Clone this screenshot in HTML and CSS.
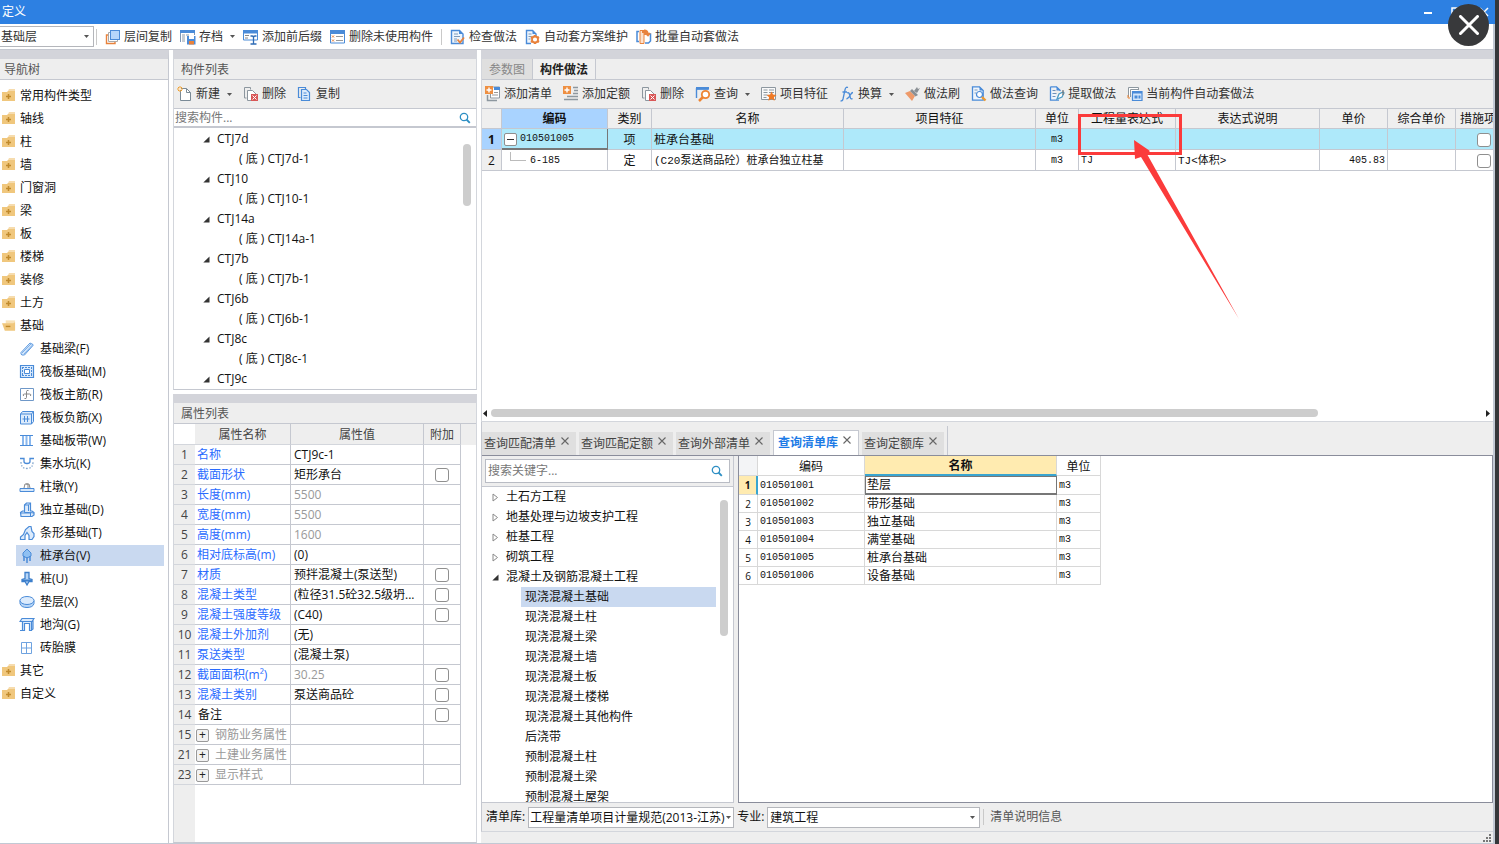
FILE: index.html
```html
<!DOCTYPE html>
<html lang="zh-CN">
<head>
<meta charset="utf-8">
<title>定义</title>
<link rel="stylesheet" href="styles.css">
</head>
<body>
<svg class="defs" aria-hidden="true">
  <symbol id="caret" viewBox="0 0 5 3"><path d="M0 0h5L2.500 3z" fill="#555"/></symbol>
  <symbol id="open" viewBox="0 0 7 7"><path d="M6.500 .5v6H.3z" fill="#333"/></symbol>
  <symbol id="closed" viewBox="0 0 7 9"><path d="M1 1v7l4.500-3.500z" fill="#fff" stroke="#8a8a8a"/></symbol>
  <symbol id="search" viewBox="0 0 12 12"><circle cx="5" cy="5" r="3.700" fill="none" stroke="#2e8fc4" stroke-width="1.300"/><path d="M7.500 7.500l3.300 3.300" stroke="#2e8fc4" stroke-width="1.800"/></symbol>
  <symbol id="x" viewBox="0 0 8 8"><path d="M.5.5l7 7m0-7l-7 7" stroke="#666" stroke-width="1.100"/></symbol>
  <symbol id="folder" viewBox="0 0 14 13"><path d="M7 0h6v2H6z" fill="#f6dcae"/><path d="M0 3h5l1-1h7v10H0z" fill="#f0c77d"/><path d="M6.500 5v5M4 7.500h5" stroke="#c08a2c" stroke-width="1.500"/></symbol>
  <symbol id="folder-open" viewBox="0 0 15 13"><path d="M4 1h10v9H4z" fill="#f8e2b8"/><path d="M0 4h12l2-1v9H3z" fill="#f0c77d"/><path d="M4 7.500h5" stroke="#c08a2c" stroke-width="1.500"/></symbol>

  <symbol id="layers" viewBox="0 0 16 16"><path d="M3 6H1.500v8.500h8.500V13" fill="none" stroke="#e8823c" stroke-width="1.400"/><path d="M5 3.500H3.500v9h9V11" fill="none" stroke="#a9a9a9"/><rect x="5.500" y="1.500" width="9" height="9" fill="#b5d6fb" stroke="#4a8bd8"/></symbol>
  <symbol id="save" viewBox="0 0 16 16"><path d="M.5 13V1.500h14V6" fill="#fff" stroke="#7c97b8"/><path d="M0 1h15v3H0z" fill="#4a8bd8"/><path d="M2 6h3m-3 2h3m-3 2h3m-3 2h3M6 6h3" stroke="#8b9aab"/><path d="M7 7h8.500v8.500H7z" fill="#4a8bd8"/><path d="M9 7h5v3H9z" fill="#fff"/><path d="M9 12h5v3.500H9z" fill="#e8823c"/></symbol>
  <symbol id="affix" viewBox="0 0 16 16"><path d="M.5 2h14v9H.5z" fill="#fff" stroke="#4a8bd8"/><path d="M0 1h15v3.500H0z" fill="#4a8bd8"/><path d="M2 6.500h4M2 9h3" stroke="#888"/><path d="M7 7h7v3H7z" fill="#fff"/><path d="M10.500 7v8M7.500 7h1.700q1.300 0 1.300 1.500Q10.500 7 12 7h1.500M7.500 15h6" fill="none" stroke="#2e6bb5" stroke-width="1.300"/></symbol>
  <symbol id="unused" viewBox="0 0 16 16"><path d="M.5 2h14v12H.5z" fill="#fff" stroke="#4a8bd8"/><path d="M0 1h15v4H0z" fill="#4a8bd8"/><path d="M2 6.500l2 2m0-2l-2 2m0 2l2 2m0-2l-2 2" stroke="#e8823c"/><path d="M6 7.500h7m-7 4h7" stroke="#999"/></symbol>
  <symbol id="check-doc" viewBox="0 0 16 16"><path d="M1.500 1.500h8l3.500 3.500v9.500H1.500z" fill="#eef5fd" stroke="#4a8bd8" stroke-width="1.400"/><path d="M9 1v4h4z" fill="#4a8bd8"/><path d="M4 5h4m-4 2.500h6M4 10h3m-3 2h3" stroke="#7f9bbb"/><path d="M7.500 10.500l2.500 3 4-5" fill="none" stroke="#e8823c" stroke-width="1.800"/></symbol>
  <symbol id="gear-doc" viewBox="0 0 16 16"><path d="M6 14.500H1.500v-13h6L11 5v2" fill="#eef5fd" stroke="#4a8bd8" stroke-width="1.400"/><path d="M7.500 1v4H11z" fill="#4a8bd8"/><path d="M3.500 5h3m-3 2.500h3m-3 2.500h2" stroke="#7f9bbb"/><path d="M10 6v9M6 8l8 5m0-5l-8 5" stroke="#e8823c" stroke-width="2.200"/><circle cx="10" cy="10.500" r="3" fill="#fff" stroke="#e8823c" stroke-width="1.800"/></symbol>
  <symbol id="batch" viewBox="0 0 16 16"><path d="M3 2.500H1v10h2M13 5h1.500v7l-2 2H9" fill="none" stroke="#4a8bd8" stroke-width="1.500"/><path d="M4 1.500h4v13H4z" fill="#fbe2cf" stroke="#e8823c"/><path d="M8 1.500q4 0 4 4.500m-2.500-2L12 6.500l2-2.500M6 3h3v3" fill="none" stroke="#e8823c" stroke-width="1.800"/></symbol>
  <symbol id="new" viewBox="0 0 16 16"><path d="M3.500 2.500h6l4 4v8h-10z" fill="#fff" stroke="#7a8a96"/><path d="M9.500 2.500v4h4" fill="none" stroke="#7a8a96"/><path d="M3 0v6M0 3h6M1 1l4 4m0-4L1 5" stroke="#f0a030"/><circle cx="3" cy="3" r="1" fill="#fff"/></symbol>
  <symbol id="delete" viewBox="0 0 16 16"><path d="M3.500 12H1.500V1.500h6v2" fill="none" stroke="#8d979f"/><path d="M4.500 4.500h5l4 4v6h-9z" fill="#fff" stroke="#8d979f"/><path d="M8 8h7v7H8z" fill="#d95757"/><path d="M9.500 9.500l4 4m0-4l-4 4" stroke="#fff"/></symbol>
  <symbol id="copy" viewBox="0 0 16 16"><path d="M3.500 11.500h-2v-10h7v2" fill="none" stroke="#4a8bd8" stroke-width="1.200"/><path d="M4.500 3.500h5l3 3v8h-8z" fill="#dcebfc" stroke="#4a8bd8" stroke-width="1.200"/><path d="M6.500 7h3m-3 2.500h4m-4 2.500h4" stroke="#4a8bd8"/></symbol>
  <symbol id="add-list" viewBox="0 0 16 16"><path d="M5.500 4V1h9v11h-9z" fill="#fff" stroke="#8d979f"/><path d="M9 1h6v3H9z" fill="#4a8bd8"/><path d="M9 6.500h4M7 9h6" stroke="#999"/><path d="M2.500 9v5.500H12" fill="none" stroke="#8d979f" stroke-width="1.500"/><path d="M0 0h8v8H0z" fill="#ee8f42"/><path d="M4 1.500v5M1.500 4h5" stroke="#fff" stroke-width="1.400"/></symbol>
  <symbol id="add-quota" viewBox="0 0 16 16"><path d="M10 1.500h5M11 4.500h4M10 7.500h5M4 10.500h11M1 13.500h14" stroke="#8d979f" stroke-width="1.500"/><path d="M0 0h8v8H0z" fill="#ee8f42"/><path d="M4 1.500v5M1.500 4h5" stroke="#fff" stroke-width="1.400"/></symbol>
  <symbol id="query" viewBox="0 0 16 16"><path d="M1.500 12V3h12" fill="none" stroke="#4a8bd8" stroke-width="1.400"/><path d="M1 1h13v2.500H1z" fill="#4a8bd8"/><circle cx="10.500" cy="8.500" r="3.700" fill="#fff" stroke="#ee8432" stroke-width="1.800"/><path d="M8 11l-4 4" stroke="#ee8432" stroke-width="2.500"/></symbol>
  <symbol id="feature" viewBox="0 0 16 16"><path d="M.5 1.500h14v12H.5z" fill="#fafafa" stroke="#8d979f"/><path d="M2.500 4h4m1.500 0h5M2.500 6.500h4m1.500 0h5M2.500 9h4m-4 2.500h3" stroke="#8d979f"/><path d="M10.500 5.500l1.500 3 3.500.4-2.600 2.300.7 3.600-3.100-1.800-3.100 1.800.7-3.600L5.600 9l3.500-.5z" fill="#ee7a28"/></symbol>
  <symbol id="fx" viewBox="0 0 16 16"><path d="M9 1.500Q6.500.5 6 4L4 13q-.6 2.300-2.500 1.800M3.500 6H8M8 7q2-1 2.500 1.500l1 3.500q.5 1.500 2 .5M14 6.500q-1.500 0-3 3t-3.500 3.500" fill="none" stroke="#4a8bd8" stroke-width="1.300"/></symbol>
  <symbol id="brush" viewBox="0 0 16 16"><path d="M0 7l5-2 5 5-3 5z" fill="#ee9a6a"/><path d="M5 5l2-2 6 6-2.500 1.500z" fill="#8a8f94"/><path d="M9 5l3-4 1 2 2-1-3 5z" fill="#8a8f94"/></symbol>
  <symbol id="doc-search" viewBox="0 0 16 16"><path d="M1.500.8h7l3.700 3.700v9.700H1.500z" fill="#eef5fd" stroke="#4a8bd8" stroke-width="1.300"/><path d="M8.500.5v4h4z" fill="#4a8bd8"/><path d="M3.500 4h3m-3 3h2" stroke="#7f9bbb"/><circle cx="8.500" cy="8.500" r="3" fill="#fff" stroke="#4a8bd8" stroke-width="1.200"/><path d="M11 11l3.500 3.500" stroke="#ee9a30" stroke-width="2.400"/></symbol>
  <symbol id="extract" viewBox="0 0 16 16"><path d="M1.500.8h6l4 4M1.500.8v13.400H10" fill="#eef5fd" stroke="#4a8bd8" stroke-width="1.300"/><path d="M7.500.5v4h4z" fill="#4a8bd8"/><path d="M3.500 4.500h3m-3 3h4m-4 3h3" stroke="#6d91ba"/><path d="M8 13l2-5 4-2 1 1-2 4z" fill="#fff" stroke="#4b9cc7" stroke-width="1.300"/><path d="M14 4v5" stroke="#777" stroke-width="1.300"/></symbol>
  <symbol id="auto" viewBox="0 0 16 16"><path d="M1.500 11V1.500h10V4" fill="#fff" stroke="#8d979f"/><path d="M3.500 11V3.500h8" fill="none" stroke="#8d979f"/><path d="M1 9v3h2" fill="none" stroke="#ee8432"/><path d="M5.500 5.500h9.500v9H5.500z" fill="#d3e6fb" stroke="#4a8bd8" stroke-width="1.200"/><path d="M5 5h10v2.500H5z" fill="#4a8bd8"/><path d="M7.500 9.500h3v3h-3zm4 0h2v3h-2z" fill="#4a8bd8"/></symbol>

  <symbol id="beam" viewBox="0 0 16 16"><path d="M2 11.500L11 2l3 1.500v1L5.500 14H3q-1.500-.5-1-2.500z" fill="#d6e8fb" stroke="#5e9ae0"/><path d="M3 12L12 3M5 13l8.500-9" stroke="#7fb0e8"/></symbol>
  <symbol id="raft" viewBox="0 0 16 16"><path d="M1.500 1.500h13v12h-13z" fill="#dcebfc" stroke="#4a8bd8" stroke-width="1.200"/><path d="M5.500 5.500h5v4h-5z" fill="#fff" stroke="#4a8bd8"/><path d="M3 3.500h10M3 11.500h10M3.500 3v9m9-9v9" stroke="#4a8bd8" stroke-dasharray="2 1"/></symbol>
  <symbol id="rebar" viewBox="0 0 16 16"><path d="M1.500 1.500h13v12h-13z" fill="#fff" stroke="#6f98c8"/><path d="M9.500 3.500q-2-.5-2 1v6q0 1.500-2 1M4.500 9q-1-2 1-2h5q2 0 1 2" fill="none" stroke="#888"/></symbol>
  <symbol id="neg-rebar" viewBox="0 0 16 16"><path d="M1.500 4l2-2.500h11v10l-2 2.500h-11z" fill="#dcebfc" stroke="#4a8bd8"/><path d="M1.500 4h11v10M12.500 4l2-2.500M5.500 6v6m3-6v6M3.500 9h7" fill="none" stroke="#4a8bd8"/></symbol>
  <symbol id="strip" viewBox="0 0 16 16"><path d="M1 2.500h13M1 12.500h13" stroke="#4a8bd8"/><path d="M3 3h2v9H3zm3.500 0h2v9h-2zM10 3h2v9h-2z" fill="#8ab8ee"/></symbol>
  <symbol id="pit" viewBox="0 0 16 16"><path d="M1 2.500h4v3q0 2 3 2t3-2v-3h4" fill="none" stroke="#4a8bd8" stroke-width="1.300"/><path d="M2 6q0 6.500 6 6.500t6-6.500" fill="none" stroke="#86a9cf" stroke-width="1.300" stroke-dasharray="1.500 1.500"/></symbol>
  <symbol id="pier" viewBox="0 0 16 16"><path d="M1 9.500h14v3H1z" fill="#d6e8fb" stroke="#4a8bd8"/><path d="M5 9l1-4h4l1 4M7 5h2v4" fill="none" stroke="#888"/></symbol>
  <symbol id="isolated" viewBox="0 0 16 16"><path d="M1.500 10.500l2-1.500h2V3l2-2h4v8h1.500l2 1.500V13l-2 1.500h-11z" fill="#dcebfc" stroke="#4a8bd8" stroke-width="1.200"/><path d="M5.500 3h4V9M9.500 3l2-2M5.500 9v1.500h5L15 11M1.500 11h10v3" fill="none" stroke="#4a8bd8"/></symbol>
  <symbol id="bar-base" viewBox="0 0 16 16"><path d="M1.500 14.500V12l3-2.500 2-5L10 1.500h2l1 5 2 2v3l-2 3h-3v-4l-2-3-2 3v4z" fill="#dcebfc" stroke="#4a8bd8" stroke-width="1.200"/></symbol>
  <symbol id="cap" viewBox="0 0 16 16"><path d="M4 5l4-4 4 4v3L8 10 4 8z" fill="#8fc0f2" stroke="#4a8bd8"/><path d="M5 8v5m3-4v6m3-7v5" stroke="#4a8bd8" stroke-width="1.500"/></symbol>
  <symbol id="pile" viewBox="0 0 16 16"><path d="M6 1.500h4v6l3 1v2h-3L8 14l-2-3.500H3v-2l3-1z" fill="#b8d6f7" stroke="#3d7fcb" stroke-width="1.300"/><path d="M3 9.500h10" stroke="#3d7fcb" stroke-width="2"/></symbol>
  <symbol id="cushion" viewBox="0 0 16 16"><path d="M1 6.500v3q1 4 7 4t7-4v-3" fill="#b8d6f7" stroke="#4a8bd8"/><ellipse cx="8" cy="6.500" rx="7" ry="4" fill="#dcebfc" stroke="#4a8bd8"/></symbol>
  <symbol id="trench" viewBox="0 0 16 16"><path d="M1 4.500l2-3h12l-2 3zM3.500 4.500v9h2v-7h5v7h2v-9M12.500 13l1.500-1V3M1 13.500h4m5 0h3" fill="#dcebfc" stroke="#4a8bd8" stroke-width="1.200"/></symbol>
  <symbol id="brick" viewBox="0 0 16 16"><path d="M2.500 2.500h10v11h-10z" fill="#fff" stroke="#6fa3e0"/><path d="M7.500 3v10M3 8h9" stroke="#6fa3e0"/></symbol>
</svg>

<div class="app">
  <header class="titlebar">
    <span>定义</span>
    <div class="win-buttons">
      <button aria-label="最小化"><svg viewBox="0 0 10 10"><path d="M1 6h8" stroke="#fff" stroke-width="2"/></svg></button>
      <button aria-label="最大化"><svg viewBox="0 0 10 10"><path d="M1 1h8v8H1z" fill="none" stroke="#fff" stroke-width="1.500"/></svg></button>
      <button aria-label="关闭"><svg viewBox="0 0 10 10"><path d="M1 1l8 8m0-8L1 9" stroke="#fff" stroke-width="1.500"/></svg></button>
    </div>
  </header>

  <div class="main-toolbar">
    <div class="combo floor"><select aria-label="楼层"><option>基础层</option></select><svg><use href="#caret"/></svg></div>
    <i class="sep"></i>
    <button class="tool"><svg><use href="#layers"/></svg>层间复制</button>
    <button class="tool"><svg><use href="#save"/></svg>存档<svg class="caret"><use href="#caret"/></svg></button>
    <button class="tool"><svg><use href="#affix"/></svg>添加前后缀</button>
    <button class="tool"><svg><use href="#unused"/></svg>删除未使用构件</button>
    <i class="sep"></i>
    <button class="tool"><svg><use href="#check-doc"/></svg>检查做法</button>
    <button class="tool"><svg><use href="#gear-doc"/></svg>自动套方案维护</button>
    <button class="tool"><svg><use href="#batch"/></svg>批量自动套做法</button>
  </div>

  <div class="workspace">
    <nav class="panel nav">
      <h2>导航树</h2>
      <ul class="nav-tree">
        <li><svg><use href="#folder"/></svg>常用构件类型</li>
        <li><svg><use href="#folder"/></svg>轴线</li>
        <li><svg><use href="#folder"/></svg>柱</li>
        <li><svg><use href="#folder"/></svg>墙</li>
        <li><svg><use href="#folder"/></svg>门窗洞</li>
        <li><svg><use href="#folder"/></svg>梁</li>
        <li><svg><use href="#folder"/></svg>板</li>
        <li><svg><use href="#folder"/></svg>楼梯</li>
        <li><svg><use href="#folder"/></svg>装修</li>
        <li><svg><use href="#folder"/></svg>土方</li>
        <li><svg><use href="#folder-open"/></svg>基础</li>
        <li class="sub"><svg><use href="#beam"/></svg>基础梁(F)</li>
        <li class="sub"><svg><use href="#raft"/></svg>筏板基础(M)</li>
        <li class="sub"><svg><use href="#rebar"/></svg>筏板主筋(R)</li>
        <li class="sub"><svg><use href="#neg-rebar"/></svg>筏板负筋(X)</li>
        <li class="sub"><svg><use href="#strip"/></svg>基础板带(W)</li>
        <li class="sub"><svg><use href="#pit"/></svg>集水坑(K)</li>
        <li class="sub"><svg><use href="#pier"/></svg>柱墩(Y)</li>
        <li class="sub"><svg><use href="#isolated"/></svg>独立基础(D)</li>
        <li class="sub"><svg><use href="#bar-base"/></svg>条形基础(T)</li>
        <li class="sub selected"><svg><use href="#cap"/></svg>桩承台(V)</li>
        <li class="sub"><svg><use href="#pile"/></svg>桩(U)</li>
        <li class="sub"><svg><use href="#cushion"/></svg>垫层(X)</li>
        <li class="sub"><svg><use href="#trench"/></svg>地沟(G)</li>
        <li class="sub"><svg><use href="#brick"/></svg>砖胎膜</li>
        <li><svg><use href="#folder"/></svg>其它</li>
        <li><svg><use href="#folder"/></svg>自定义</li>
      </ul>
    </nav>

    <div class="middle">
      <section class="panel components">
        <h2>构件列表</h2>
        <div class="toolbar">
          <button class="tool"><svg><use href="#new"/></svg>新建<svg class="caret"><use href="#caret"/></svg></button>
          <button class="tool"><svg><use href="#delete"/></svg>删除</button>
          <button class="tool"><svg><use href="#copy"/></svg>复制</button>
        </div>
        <div class="search flat"><input type="text" aria-label="搜索构件" placeholder="搜索构件..."><svg><use href="#search"/></svg></div>
        <div class="tree-box">
          <ul class="comp-tree">
            <li><svg><use href="#open"/></svg>CTJ7d</li><li class="leaf">( 底 ) CTJ7d-1</li>
            <li><svg><use href="#open"/></svg>CTJ10</li><li class="leaf">( 底 ) CTJ10-1</li>
            <li><svg><use href="#open"/></svg>CTJ14a</li><li class="leaf">( 底 ) CTJ14a-1</li>
            <li><svg><use href="#open"/></svg>CTJ7b</li><li class="leaf">( 底 ) CTJ7b-1</li>
            <li><svg><use href="#open"/></svg>CTJ6b</li><li class="leaf">( 底 ) CTJ6b-1</li>
            <li><svg><use href="#open"/></svg>CTJ8c</li><li class="leaf">( 底 ) CTJ8c-1</li>
            <li><svg><use href="#open"/></svg>CTJ9c</li>
          </ul>
          <div class="vbar comp-bar"></div>
        </div>
      </section>

      <section class="panel props">
        <h2>属性列表</h2>
        <div class="props-body">
        <table class="prop-table">
          <colgroup><col class="p-no"><col class="p-name"><col class="p-value"><col class="p-add"></colgroup>
          <thead><tr><th class="blank"></th><th>属性名称</th><th>属性值</th><th>附加</th></tr></thead>
          <tbody>
            <tr><th>1</th><td class="link">名称</td><td>CTJ9c-1</td><td></td></tr>
            <tr><th>2</th><td class="link">截面形状</td><td>矩形承台</td><td><input type="checkbox" aria-label="截面形状 附加"></td></tr>
            <tr><th>3</th><td class="link">长度(mm)</td><td class="dim">5500</td><td></td></tr>
            <tr><th>4</th><td class="link">宽度(mm)</td><td class="dim">5500</td><td></td></tr>
            <tr><th>5</th><td class="link">高度(mm)</td><td class="dim">1600</td><td></td></tr>
            <tr><th>6</th><td class="link">相对底标高(m)</td><td>(0)</td><td></td></tr>
            <tr><th>7</th><td class="link">材质</td><td>预拌混凝土(泵送型)</td><td><input type="checkbox" aria-label="材质 附加"></td></tr>
            <tr><th>8</th><td class="link">混凝土类型</td><td>(粒径31.5砼32.5级坍...</td><td><input type="checkbox" aria-label="混凝土类型 附加"></td></tr>
            <tr><th>9</th><td class="link">混凝土强度等级</td><td>(C40)</td><td><input type="checkbox" aria-label="混凝土强度等级 附加"></td></tr>
            <tr><th>10</th><td class="link">混凝土外加剂</td><td>(无)</td><td></td></tr>
            <tr><th>11</th><td class="link">泵送类型</td><td>(混凝土泵)</td><td></td></tr>
            <tr><th>12</th><td class="link">截面面积(m²)</td><td class="dim">30.25</td><td><input type="checkbox" aria-label="截面面积 附加"></td></tr>
            <tr><th>13</th><td class="link">混凝土类别</td><td>泵送商品砼</td><td><input type="checkbox" aria-label="混凝土类别 附加"></td></tr>
            <tr><th>14</th><td>备注</td><td></td><td><input type="checkbox" aria-label="备注 附加"></td></tr>
            <tr><th>15</th><td class="dim group"><button class="expander">+</button>钢筋业务属性</td><td></td><td></td></tr>
            <tr><th>21</th><td class="dim group"><button class="expander">+</button>土建业务属性</td><td></td><td></td></tr>
            <tr><th>23</th><td class="dim group"><button class="expander">+</button>显示样式</td><td></td><td></td></tr>
          </tbody>
        </table>
        <div class="gutter"></div>
        </div>
      </section>
    </div>

    <main class="right">
      <section class="panel methods">
        <div class="top-tabs"><button>参数图</button><button class="active">构件做法</button></div>
        <div class="toolbar wide">
          <button class="tool"><svg><use href="#add-list"/></svg>添加清单</button>
          <button class="tool"><svg><use href="#add-quota"/></svg>添加定额</button>
          <button class="tool"><svg><use href="#delete"/></svg>删除</button>
          <button class="tool"><svg><use href="#query"/></svg>查询<svg class="caret"><use href="#caret"/></svg></button>
          <button class="tool"><svg><use href="#feature"/></svg>项目特征</button>
          <button class="tool"><svg><use href="#fx"/></svg>换算<svg class="caret"><use href="#caret"/></svg></button>
          <button class="tool"><svg><use href="#brush"/></svg>做法刷</button>
          <button class="tool"><svg><use href="#doc-search"/></svg>做法查询</button>
          <button class="tool"><svg><use href="#extract"/></svg>提取做法</button>
          <button class="tool"><svg><use href="#auto"/></svg>当前构件自动套做法</button>
        </div>
        <div class="method-box">
          <table class="method-table">
            <colgroup><col class="m-no"><col class="m-code"><col class="m-kind"><col class="m-name"><col class="m-feat"><col class="m-unit"><col class="m-expr"><col class="m-note"><col class="m-price"><col class="m-price"><col class="m-step"></colgroup>
            <thead><tr><th></th><th class="current">编码</th><th>类别</th><th>名称</th><th>项目特征</th><th>单位</th><th>工程量表达式</th><th>表达式说明</th><th>单价</th><th>综合单价</th><th>措施项目</th></tr></thead>
            <tbody>
              <tr class="active"><th>1</th><td class="focus mono"><div class="tree-cell"><button class="minus" aria-label="折叠"></button>010501005</div></td><td class="mid">项</td><td>桩承台基础</td><td></td><td class="mid mono">m3</td><td></td><td></td><td></td><td></td><td class="mid"><input type="checkbox" aria-label="措施项目 1"></td></tr>
              <tr><th>2</th><td class="mono"><div class="tree-cell"><i class="branch"></i>6-185</div></td><td class="mid">定</td><td class="mixed">(C20泵送商品砼）桩承台独立柱基</td><td></td><td class="mid mono">m3</td><td class="mono">TJ</td><td class="mixed">TJ&lt;体积&gt;</td><td class="num mono">405.83</td><td></td><td class="mid"><input type="checkbox" aria-label="措施项目 2"></td></tr>
            </tbody>
          </table>
        </div>
        <div class="hbar"><svg viewBox="0 0 4 7"><path d="M4 0v7L0 3.500z" fill="#222"/></svg><div class="track"><div class="thumb"></div></div><svg viewBox="0 0 4 7"><path d="M0 0v7l4-3.500z" fill="#222"/></svg></div>
      </section>

      <section class="query">
        <div class="query-tabs">
          <div class="qtab"><button>查询匹配清单</button><button aria-label="关闭"><svg><use href="#x"/></svg></button></div>
          <div class="qtab"><button>查询匹配定额</button><button aria-label="关闭"><svg><use href="#x"/></svg></button></div>
          <div class="qtab"><button>查询外部清单</button><button aria-label="关闭"><svg><use href="#x"/></svg></button></div>
          <div class="qtab active"><button>查询清单库</button><button aria-label="关闭"><svg><use href="#x"/></svg></button></div>
          <div class="qtab"><button>查询定额库</button><button aria-label="关闭"><svg><use href="#x"/></svg></button></div>
          <i class="tab-end"></i>
        </div>
        <div class="query-body">
          <div class="chapters">
            <div class="search-wrap"><div class="search boxed"><input type="text" aria-label="搜索关键字" placeholder="搜索关键字..."><svg><use href="#search"/></svg></div></div>
            <div class="tree-box">
              <ul class="chap-tree">
                <li><svg><use href="#closed"/></svg>土石方工程</li>
                <li><svg><use href="#closed"/></svg>地基处理与边坡支护工程</li>
                <li><svg><use href="#closed"/></svg>桩基工程</li>
                <li><svg><use href="#closed"/></svg>砌筑工程</li>
                <li><svg class="opened"><use href="#open"/></svg>混凝土及钢筋混凝土工程</li>
                <li class="leaf selected">现浇混凝土基础</li>
                <li class="leaf">现浇混凝土柱</li>
                <li class="leaf">现浇混凝土梁</li>
                <li class="leaf">现浇混凝土墙</li>
                <li class="leaf">现浇混凝土板</li>
                <li class="leaf">现浇混凝土楼梯</li>
                <li class="leaf">现浇混凝土其他构件</li>
                <li class="leaf">后浇带</li>
                <li class="leaf">预制混凝土柱</li>
                <li class="leaf">预制混凝土梁</li>
                <li class="leaf">预制混凝土屋架</li>
              </ul>
              <div class="vbar chap-bar"></div>
            </div>
          </div>
          <div class="results">
            <table class="result-table">
              <colgroup><col class="r-no"><col class="r-code"><col class="r-name"><col class="r-unit"></colgroup>
              <thead><tr><th class="corner"></th><th>编码</th><th class="current">名称</th><th>单位</th></tr></thead>
              <tbody>
                <tr class="active"><th>1</th><td class="mono">010501001</td><td class="focus">垫层</td><td class="mono">m3</td></tr>
                <tr><th>2</th><td class="mono">010501002</td><td>带形基础</td><td class="mono">m3</td></tr>
                <tr><th>3</th><td class="mono">010501003</td><td>独立基础</td><td class="mono">m3</td></tr>
                <tr><th>4</th><td class="mono">010501004</td><td>满堂基础</td><td class="mono">m3</td></tr>
                <tr><th>5</th><td class="mono">010501005</td><td>桩承台基础</td><td class="mono">m3</td></tr>
                <tr><th>6</th><td class="mono">010501006</td><td>设备基础</td><td class="mono">m3</td></tr>
              </tbody>
            </table>
          </div>
        </div>
        <div class="query-foot">
          <label for="lib">清单库:</label>
          <div class="combo lib"><select id="lib"><option>工程量清单项目计量规范(2013-江苏)</option></select><svg><use href="#caret"/></svg></div>
          <label for="major">专业:</label>
          <div class="combo major"><select id="major"><option>建筑工程</option></select><svg><use href="#caret"/></svg></div>
          <i class="sep"></i>
          <span class="info">清单说明信息</span>
        </div>
      </section>
      <footer class="status"><svg viewBox="0 0 8 8"><path d="M6 0h2v2H6zM3 3h2v2H3zm3 0h2v2H6zM0 6h2v2H0zm3 0h2v2H3zm3 0h2v2H6z" fill="#777"/></svg></footer>
    </main>
  </div>
</div>

<svg class="callout" viewBox="0 0 164 208" aria-hidden="true">
  <rect x="1.500" y="1.500" width="101" height="38" fill="none" stroke="#fb3b3b" stroke-width="3"/>
  <path d="M56 26l16 11-3 3 92 165L63 43l-6 2z" fill="#fb3b3b"/>
</svg>
<button class="viewer-close" aria-label="关闭"><svg viewBox="0 0 20 20"><path d="M1.500 1.500l17 17m0-17l-17 17" stroke="#fff" stroke-width="3" stroke-linecap="round"/></svg></button>
</body>
</html>
```
FILE: styles.css
```css
* { box-sizing: border-box; }

body {
  margin: 0;
  height: 100vh;
  padding-right: 4px;
  overflow: hidden;
  position: relative;
  background: #35373a;
  color: #111;
  font: 12px/20px "Open Sans", "Noto Sans CJK SC", sans-serif;
}

button, input, select { font: inherit; color: inherit; margin: 0; padding: 0; }
button { background: none; border: 0; white-space: nowrap; }
ul { list-style: none; margin: 0; padding: 0; }
table { border-collapse: separate; border-spacing: 0; table-layout: fixed; }
th { font-weight: normal; }
th, td { padding: 0; overflow: hidden; white-space: nowrap; }
.defs { position: absolute; width: 0; height: 0; }

.app {
  height: 100%;
  display: flex;
  flex-direction: column;
  background: #fff;
  border-right: 2px solid #c2c9d4;
  border-bottom: 1px solid #c2c9d4;
}

.titlebar {
  flex: none;
  height: 24px;
  display: flex;
  justify-content: space-between;
  align-items: center;
  padding: 0 2px;
  margin-right: -2px;
  background: #2d80e2;
  color: #fff;
}
.win-buttons { display: flex; gap: 18px; padding-right: 4px; }
.win-buttons svg { width: 10px; height: 10px; display: block; }

.main-toolbar {
  flex: none;
  height: 26px;
  display: flex;
  align-items: center;
  gap: 8px;
  border-bottom: 1px solid #c5c8d0;
  color: #333;
}
.tool { display: flex; align-items: center; gap: 3px; line-height: 20px; }
.tool svg { width: 16px; height: 16px; flex: none; }
.tool .caret { width: 5px; height: 3px; margin-left: 4px; }
.sep { width: 1px; height: 16px; background: #c9c9c9; }

.combo { position: relative; height: 21px; border: 1px solid #b4b6bb; background: #fff; }
.combo select {
  appearance: none;
  width: 100%;
  height: 19px;
  padding: 0 12px 0 2px;
  border: 0;
  background: none;
  line-height: 19px;
}
.combo svg { position: absolute; right: 4px; top: 8px; width: 5px; height: 3px; pointer-events: none; }
.floor { width: 94px; border-left: 0; }
.floor select { padding-left: 1px; }
.floor + .sep { margin-left: -6px; }

.workspace { flex: 1; min-height: 0; display: flex; gap: 4px; }
.panel {
  display: flex;
  flex-direction: column;
  min-height: 0;
  border-top: 9px solid #d3d4da;
  background: #fff;
}
.panel h2 {
  flex: none;
  height: 21px;
  margin: 0;
  padding: 0 7px;
  background: #eee;
  border-bottom: 1px solid #c5c8d0;
  color: #555;
  font-size: 12px;
  font-weight: normal;
  line-height: 21px;
}
.nav { width: 169px; border-right: 1px solid #c5c8d0; }
.nav h2 { padding-left: 4px; }
.nav-tree { padding: 4px 4px 0 2px; }
.nav-tree li { display: flex; align-items: center; gap: 4px; height: 23px; line-height: 20px; }
.nav-tree svg { width: 14px; height: 13px; }
.nav-tree .sub { gap: 5px; height: 23px; margin-left: 14px; padding-left: 3px; }
.nav-tree .sub svg { width: 16px; height: 16px; }
.nav-tree .selected { height: 21px; margin-top: 1px; margin-bottom: 1px; background: #c9d9f0; }

.middle { width: 304px; display: grid; grid-template-rows: 340fr 449fr; gap: 4px; }
.components, .props { border-left: 1px solid #d3d6dc; border-right: 1px solid #d3d6dc; border-bottom: 1px solid #c5c8d0; }
.toolbar {
  flex: none;
  height: 29px;
  display: flex;
  align-items: center;
  gap: 11px;
  padding: 0 3px;
  background: #eee;
  border-bottom: 1px solid #c5c8d0;
  color: #333;
}
.search { display: flex; align-items: center; background: #fff; }
.search input { flex: 1; min-width: 0; height: 18px; border: 0; outline: 0; background: none; }
.search input::placeholder { color: #777; opacity: 1; }
.search svg { width: 12px; height: 12px; }
.flat { flex: none; height: 19px; padding: 0 5px 0 1px; border-bottom: 2px solid #c5c8d0; }
.tree-box { flex: 1; min-height: 0; display: flex; overflow: hidden; background: #fff; }
.tree-box ul { flex: 1; }
.tree-box li { display: flex; align-items: center; height: 20px; line-height: 20px; }
.vbar { width: 8px; border-radius: 4px; background: #cdcdcd; }
.comp-tree { padding-top: 1px; }
.comp-tree li { gap: 7px; padding-left: 29px; }
.comp-tree svg { width: 7px; height: 7px; }
.comp-tree .leaf { padding-left: 65px; }
.comp-bar { height: 62px; margin: 16px 5px 0 0; }

.props-body { flex: 1; min-height: 0; display: flex; flex-direction: column; background: linear-gradient(#eee, #eee) top / 100% 21px no-repeat; }
.prop-table { width: 287px; }
.p-no { width: 21px; }
.p-name { width: 96px; }
.p-value { width: 133px; }
.p-add { width: 37px; }
.prop-table th { height: 20px; background: #eee; border-bottom: 1px solid #d3d6dc; color: #444; line-height: 18px; }
.prop-table thead th { height: 21px; padding-top: 1px; border-right: 1px solid #c5c8d0; }
.prop-table thead .blank { background: #fff; border-right: 0; }
.prop-table td { height: 20px; padding-left: 3px; background: #fff; border-right: 1px solid #c5c8d0; border-bottom: 1px solid #c5c8d0; line-height: 18px; }
.prop-table td:last-child { padding: 0; }
.prop-table .link { padding-left: 2px; color: #2a6bff; }
.prop-table .dim { color: #999; }
.prop-table .group { padding-left: 1px; }
.expander { width: 13px; height: 13px; margin-right: 6px; border: 1px solid #999; border-radius: 2px; background: #f2f2f2; color: #222; line-height: 10px; vertical-align: middle; }
.gutter { flex: 1; width: 21px; background: #eee; }

input[type="checkbox"] {
  appearance: none;
  display: block;
  width: 14px;
  height: 14px;
  margin: 0 auto;
  border: 1px solid #8f8f8f;
  border-radius: 3px;
  background: #fff;
}

.right { flex: 1; min-width: 0; display: grid; grid-template-rows: 372fr 410fr 11px; background: #eee; }
.methods { min-width: 0; border-left: 1px solid #d3d6dc; border-bottom: 1px solid #d3d6dc; }
.top-tabs { flex: none; display: flex; height: 21px; background: #eee; border-bottom: 1px solid #c5c8d0; }
.top-tabs button { padding: 1px 7px 0; background: #dfdfdf; color: #888; border-right: 1px solid #c5c8d0; }
.top-tabs .active { background: #f0f0f0; color: #222; font-weight: bold; }
.method-box { flex: 1; min-height: 0; overflow: hidden; }
.method-table { width: 1031px; }
.m-no { width: 20px; }
.m-code { width: 106px; }
.m-kind { width: 44px; }
.m-name { width: 192px; }
.m-feat { width: 192px; }
.m-unit { width: 43px; }
.m-expr { width: 97px; }
.m-note { width: 144px; }
.m-price { width: 68px; }
.m-step { width: 57px; }
.method-table th { background: #efefef; border-right: 1px solid #c5c8d0; border-bottom: 1px solid #c5c8d0; line-height: 18px; }
.method-table thead th { height: 20px; padding-top: 1px; }
.method-table td { height: 21px; padding: 2px 2px 0; border-right: 1px solid #c5c8d0; border-bottom: 1px solid #c5c8d0; line-height: 18px; }
.method-table .current { background: #a9d3ff; font-weight: bold; }
.method-table .active td { background: #aee9fa; }
.method-table .active th { background: #a9d3ff; font-weight: bold; }
.method-table tbody th { padding-top: 2px; }
.method-table .active .focus { padding-top: 1px; border-right: 1px solid #777; border-bottom: 2px solid #777; }
.method-table .mid { text-align: center; }
.method-table .num { text-align: right; }
.mono { font-family: "Liberation Mono", "Noto Sans CJK SC", monospace; font-size: 10px; }
.mixed { font-family: "Liberation Mono", "Noto Sans CJK SC", monospace; font-size: 11px; }
.tree-cell { display: flex; align-items: center; gap: 3px; height: 18px; }
.minus { display: flex; align-items: center; justify-content: center; width: 13px; height: 13px; border: 1px solid #8f8f8f; border-radius: 2px; background: #fff; }
.minus::before { content: ""; width: 7px; height: 1px; background: #333; }
.branch { align-self: flex-start; width: 16px; height: 9px; margin: 0 1px 0 6px; border-left: 1px solid #bbb; border-bottom: 1px solid #bbb; }
.hbar { flex: none; display: flex; align-items: center; gap: 4px; height: 16px; padding: 0 3px 0 1px; }
.hbar svg { width: 4px; height: 7px; }
.track { flex: 1; }
.thumb { width: 83.500%; height: 8px; border-radius: 4px; background: #cdcdcd; }

.query { min-width: 0; min-height: 0; display: flex; flex-direction: column; border-left: 1px solid #c5c8d0; border-bottom: 1px solid #d3d6dc; }
.query-tabs { flex: none; display: flex; align-items: flex-end; gap: 3px; height: 34px; padding-top: 4px; border-bottom: 1px solid #8a8d9b; }
.qtab { display: flex; gap: 5px; height: 23px; padding: 0 7px 0 2px; background: #dfdfdf; color: #444; line-height: 24px; }
.qtab button { line-height: 24px; }
.qtab svg { display: block; width: 8px; height: 8px; margin-bottom: 6px; }
.qtab.active { height: 25px; padding-left: 4px; background: #fff; border: 1px solid #c5c8d0; border-bottom: 0; color: #1d7be6; font-weight: bold; }
.tab-end { align-self: stretch; width: 1px; background: #c5c8d0; }
.query-body { flex: 1; min-height: 0; display: flex; gap: 4px; }
.chapters { width: 252px; display: flex; flex-direction: column; border-right: 1px solid #c5c8d0; border-bottom: 1px solid #c5c8d0; }
.search-wrap { padding: 3px; border-bottom: 1px solid #c5c8d0; }
.boxed { height: 24px; padding: 0 6px 0 2px; border: 1px solid #b9bcc4; }
.chap-tree li { gap: 7px; padding-left: 10px; }
.chap-tree svg { width: 7px; height: 9px; }
.chap-tree .opened { height: 7px; }
.chap-tree .leaf { margin-left: 39px; padding-left: 4px; }
.chap-tree .selected { background: #c9d9f0; }
.chap-bar { height: 136px; margin: 13px 5px 0 4px; }
.results { flex: 1; min-width: 0; background: #fff; border: 1px solid #8a8d9b; border-top: 0; }
.result-table { width: 362px; }
.r-no { width: 19px; }
.r-code { width: 107px; }
.r-name { width: 192px; }
.r-unit { width: 44px; }
.result-table th, .result-table td { height: 18px; border-right: 1px solid #d8d8d8; border-bottom: 1px solid #d8d8d8; line-height: 16px; }
.result-table td { padding: 1px 0 0 2px; }
.result-table thead th { height: 20px; padding-top: 2px; }
.result-table .corner { background: #f3f4f6; }
.result-table tbody th { font-size: 10px; }
.result-table thead .current { background: #ffebb0; border-bottom: 2px solid #3aa5d0; font-weight: bold; }
.result-table .active th { background: #ffebb0; border-right: 2px solid #3aa5d0; font-weight: bold; }
.result-table .active .focus { height: 19px; padding: 0 0 0 1px; border: 1px solid #777; border-bottom-width: 2px; }
.query-foot { flex: none; display: flex; align-items: center; gap: 3px; height: 28px; padding-left: 4px; }
.lib { width: 206px; }
.lib select { padding: 0 8px 0 1px; }
.lib svg { right: 2px; }
.major { width: 213px; }
.info { margin-left: 3px; color: #555; }
.status { display: flex; justify-content: flex-end; align-items: center; padding-right: 2px; }
.status svg { width: 8px; height: 8px; }

.callout { position: absolute; left: 1078px; top: 114px; width: 164px; height: 208px; pointer-events: none; }
.viewer-close { position: absolute; top: 4px; right: 10px; display: flex; align-items: center; justify-content: center; width: 41px; height: 42px; border-radius: 50%; background: #38393b; }
.viewer-close svg { width: 20px; height: 20px; }
```
